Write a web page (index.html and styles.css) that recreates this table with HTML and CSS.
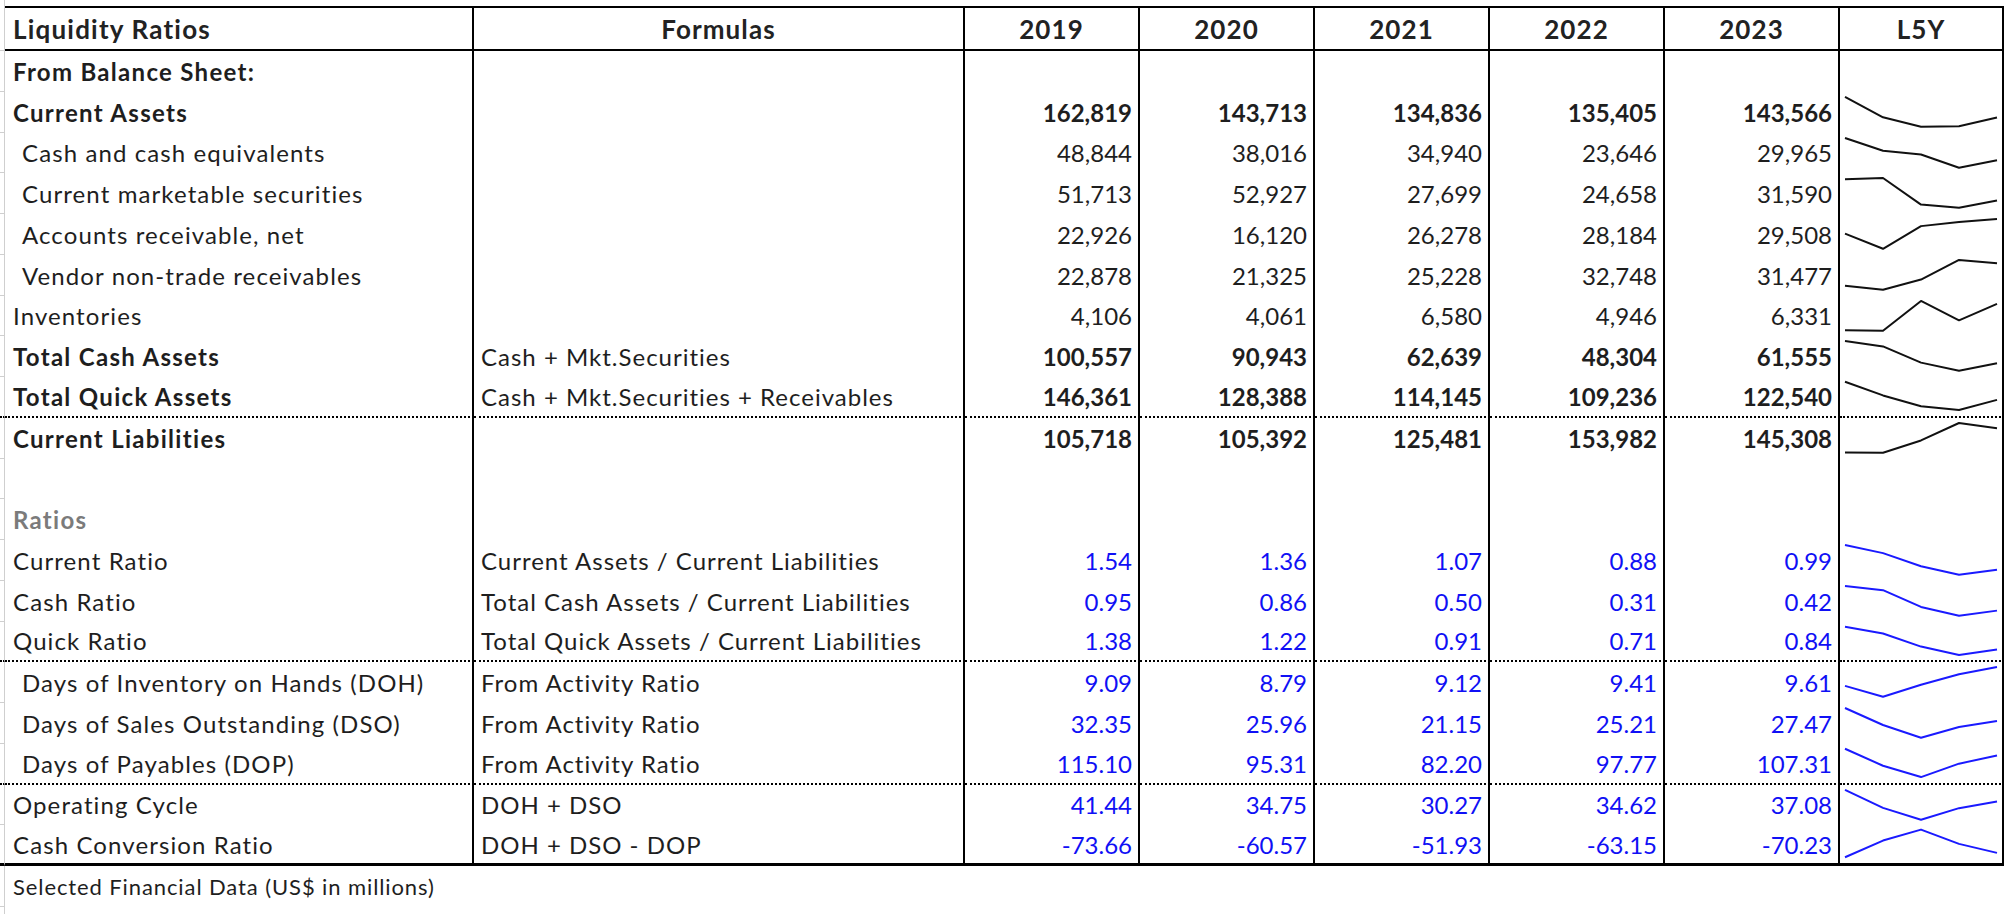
FILE: index.html
```html
<!DOCTYPE html>
<html lang="en">
<head>
<meta charset="utf-8">
<title>Liquidity Ratios</title>
<link rel="stylesheet" href="styles.css">
</head>
<body>
<div class="sheet">
  <div class="row spacer"><div class="gut"></div><div class="blank"></div></div>

  <div class="row head">
    <div class="gut"></div>
    <div class="c lbl">Liquidity Ratios</div>
    <div class="c ctr">Formulas</div>
    <div class="c ctr">2019</div>
    <div class="c ctr">2020</div>
    <div class="c ctr">2021</div>
    <div class="c ctr">2022</div>
    <div class="c ctr">2023</div>
    <div class="c ctr">L5Y</div>
  </div>

  <div class="row bold">
    <div class="gut"></div>
    <div class="c lbl">From Balance Sheet:</div>
    <div class="c"></div>
    <div class="c"></div><div class="c"></div><div class="c"></div><div class="c"></div><div class="c"></div>
    <div class="c"></div>
  </div>

  <div class="row bold">
    <div class="gut"></div>
    <div class="c lbl">Current Assets</div>
    <div class="c"></div>
    <div class="c num">162,819</div><div class="c num">143,713</div><div class="c num">134,836</div><div class="c num">135,405</div><div class="c num">143,566</div>
    <div class="c spark"><svg viewBox="0 0 162 41" preserveAspectRatio="none"><polyline points="5,5 43,25.5 81,35 119,34.4 157,25.6"/></svg></div>
  </div>

  <div class="row">
    <div class="gut"></div>
    <div class="c lbl ind">Cash and cash equivalents</div>
    <div class="c"></div>
    <div class="c num">48,844</div><div class="c num">38,016</div><div class="c num">34,940</div><div class="c num">23,646</div><div class="c num">29,965</div>
    <div class="c spark"><svg viewBox="0 0 162 41" preserveAspectRatio="none"><polyline points="5,5 43,17.9 81,21.6 119,35 157,27.5"/></svg></div>
  </div>

  <div class="row">
    <div class="gut"></div>
    <div class="c lbl ind">Current marketable securities</div>
    <div class="c"></div>
    <div class="c num">51,713</div><div class="c num">52,927</div><div class="c num">27,699</div><div class="c num">24,658</div><div class="c num">31,590</div>
    <div class="c spark"><svg viewBox="0 0 162 41" preserveAspectRatio="none"><polyline points="5,6.3 43,5 81,31.8 119,35 157,27.6"/></svg></div>
  </div>

  <div class="row">
    <div class="gut"></div>
    <div class="c lbl ind">Accounts receivable, net</div>
    <div class="c"></div>
    <div class="c num">22,926</div><div class="c num">16,120</div><div class="c num">26,278</div><div class="c num">28,184</div><div class="c num">29,508</div>
    <div class="c spark"><svg viewBox="0 0 162 41" preserveAspectRatio="none"><polyline points="5,19.7 43,35 81,12.2 119,8 157,5"/></svg></div>
  </div>

  <div class="row">
    <div class="gut"></div>
    <div class="c lbl ind">Vendor non-trade receivables</div>
    <div class="c"></div>
    <div class="c num">22,878</div><div class="c num">21,325</div><div class="c num">25,228</div><div class="c num">32,748</div><div class="c num">31,477</div>
    <div class="c spark"><svg viewBox="0 0 162 41" preserveAspectRatio="none"><polyline points="5,30.9 43,35 81,24.7 119,5 157,8.3"/></svg></div>
  </div>

  <div class="row">
    <div class="gut"></div>
    <div class="c lbl">Inventories</div>
    <div class="c"></div>
    <div class="c num">4,106</div><div class="c num">4,061</div><div class="c num">6,580</div><div class="c num">4,946</div><div class="c num">6,331</div>
    <div class="c spark"><svg viewBox="0 0 162 41" preserveAspectRatio="none"><polyline points="5,34.5 43,35 81,5 119,24.5 157,8"/></svg></div>
  </div>

  <div class="row bold">
    <div class="gut"></div>
    <div class="c lbl">Total Cash Assets</div>
    <div class="c fx">Cash + Mkt.Securities</div>
    <div class="c num">100,557</div><div class="c num">90,943</div><div class="c num">62,639</div><div class="c num">48,304</div><div class="c num">61,555</div>
    <div class="c spark"><svg viewBox="0 0 162 41" preserveAspectRatio="none"><polyline points="5,5 43,10.5 81,26.8 119,35 157,27.4"/></svg></div>
  </div>

  <div class="row bold dotted">
    <div class="gut"></div>
    <div class="c lbl">Total Quick Assets</div>
    <div class="c fx">Cash + Mkt.Securities + Receivables</div>
    <div class="c num">146,361</div><div class="c num">128,388</div><div class="c num">114,145</div><div class="c num">109,236</div><div class="c num">122,540</div>
    <div class="c spark"><svg viewBox="0 0 162 41" preserveAspectRatio="none"><polyline points="5,5 43,19.5 81,31 119,35 157,24.2"/></svg></div>
  </div>

  <div class="row bold">
    <div class="gut"></div>
    <div class="c lbl">Current Liabilities</div>
    <div class="c"></div>
    <div class="c num">105,718</div><div class="c num">105,392</div><div class="c num">125,481</div><div class="c num">153,982</div><div class="c num">145,308</div>
    <div class="c spark"><svg viewBox="0 0 162 41" preserveAspectRatio="none"><polyline points="5,34.8 43,35 81,22.6 119,5 157,10.4"/></svg></div>
  </div>

  <div class="row">
    <div class="gut"></div>
    <div class="c lbl"></div>
    <div class="c"></div>
    <div class="c"></div><div class="c"></div><div class="c"></div><div class="c"></div><div class="c"></div>
    <div class="c"></div>
  </div>

  <div class="row bold">
    <div class="gut"></div>
    <div class="c lbl muted">Ratios</div>
    <div class="c"></div>
    <div class="c"></div><div class="c"></div><div class="c"></div><div class="c"></div><div class="c"></div>
    <div class="c"></div>
  </div>

  <div class="row blue">
    <div class="gut"></div>
    <div class="c lbl">Current Ratio</div>
    <div class="c fx">Current Assets / Current Liabilities</div>
    <div class="c num">1.54</div><div class="c num">1.36</div><div class="c num">1.07</div><div class="c num">0.88</div><div class="c num">0.99</div>
    <div class="c spark"><svg viewBox="0 0 162 41" preserveAspectRatio="none"><polyline points="5,5 43,13.2 81,26.4 119,35 157,30"/></svg></div>
  </div>

  <div class="row blue">
    <div class="gut"></div>
    <div class="c lbl">Cash Ratio</div>
    <div class="c fx">Total Cash Assets / Current Liabilities</div>
    <div class="c num">0.95</div><div class="c num">0.86</div><div class="c num">0.50</div><div class="c num">0.31</div><div class="c num">0.42</div>
    <div class="c spark"><svg viewBox="0 0 162 41" preserveAspectRatio="none"><polyline points="5,5 43,9.2 81,26.1 119,35 157,29.8"/></svg></div>
  </div>

  <div class="row blue dotted">
    <div class="gut"></div>
    <div class="c lbl">Quick Ratio</div>
    <div class="c fx">Total Quick Assets / Current Liabilities</div>
    <div class="c num">1.38</div><div class="c num">1.22</div><div class="c num">0.91</div><div class="c num">0.71</div><div class="c num">0.84</div>
    <div class="c spark"><svg viewBox="0 0 162 41" preserveAspectRatio="none"><polyline points="5,5 43,12.2 81,26 119,35 157,29.2"/></svg></div>
  </div>

  <div class="row blue">
    <div class="gut"></div>
    <div class="c lbl ind">Days of Inventory on Hands (DOH)</div>
    <div class="c fx">From Activity Ratio</div>
    <div class="c num">9.09</div><div class="c num">8.79</div><div class="c num">9.12</div><div class="c num">9.41</div><div class="c num">9.61</div>
    <div class="c spark"><svg viewBox="0 0 162 41" preserveAspectRatio="none"><polyline points="5,24 43,35 81,22.9 119,12.3 157,5"/></svg></div>
  </div>

  <div class="row blue">
    <div class="gut"></div>
    <div class="c lbl ind">Days of Sales Outstanding (DSO)</div>
    <div class="c fx">From Activity Ratio</div>
    <div class="c num">32.35</div><div class="c num">25.96</div><div class="c num">21.15</div><div class="c num">25.21</div><div class="c num">27.47</div>
    <div class="c spark"><svg viewBox="0 0 162 41" preserveAspectRatio="none"><polyline points="5,5 43,22.1 81,35 119,24.1 157,18.1"/></svg></div>
  </div>

  <div class="row blue dotted">
    <div class="gut"></div>
    <div class="c lbl ind">Days of Payables (DOP)</div>
    <div class="c fx">From Activity Ratio</div>
    <div class="c num">115.10</div><div class="c num">95.31</div><div class="c num">82.20</div><div class="c num">97.77</div><div class="c num">107.31</div>
    <div class="c spark"><svg viewBox="0 0 162 41" preserveAspectRatio="none"><polyline points="5,5 43,23 81,35 119,20.8 157,12.1"/></svg></div>
  </div>

  <div class="row blue">
    <div class="gut"></div>
    <div class="c lbl">Operating Cycle</div>
    <div class="c fx">DOH + DSO</div>
    <div class="c num">41.44</div><div class="c num">34.75</div><div class="c num">30.27</div><div class="c num">34.62</div><div class="c num">37.08</div>
    <div class="c spark"><svg viewBox="0 0 162 41" preserveAspectRatio="none"><polyline points="5,5 43,23 81,35 119,23.3 157,16.7"/></svg></div>
  </div>

  <div class="row blue last">
    <div class="gut"></div>
    <div class="c lbl">Cash Conversion Ratio</div>
    <div class="c fx">DOH + DSO - DOP</div>
    <div class="c num">-73.66</div><div class="c num">-60.57</div><div class="c num">-51.93</div><div class="c num">-63.15</div><div class="c num">-70.23</div>
    <div class="c spark"><svg viewBox="0 0 162 41" preserveAspectRatio="none"><polyline points="5,35 43,16.9 81,5 119,20.5 157,30.3"/></svg></div>
  </div>

  <div class="row foot">
    <div class="gut"></div>
    <div class="note">Selected Financial Data (US$ in millions)</div>
  </div>

  <div class="row tail"><div class="gut"></div><div class="blank"></div></div>
</div>
</body>
</html>
```

FILE: styles.css
```css
* {
  box-sizing: border-box;
}

html, body {
  margin: 0;
  padding: 0;
  background: #ffffff;
}

body {
  font-family: "Lato", "Noto Sans", sans-serif;
  font-size: 24px;
  color: #1e1e1e;
}

.sheet {
  display: grid;
  grid-template-columns: 5px 469px 491px repeat(5, 175px) 164px;
  grid-template-rows: 6px 45px repeat(20, 40.75px) 40.75px 12px;
  width: 2004px;
}

.row {
  display: contents;
}

.gut {
  border-right: 1px solid #cfcfcf;
  border-bottom: 1px solid #cfcfcf;
}

.spacer .gut,
.tail .gut {
  border-bottom: none;
}

.blank {
  grid-column: 2 / -1;
}

.c {
  display: flex;
  align-items: center;
  border-right: 2px solid #000;
  padding: 0 6px;
  white-space: nowrap;
  overflow: hidden;
  min-width: 0;
}

.head .c {
  border-top: 2px solid #000;
  border-bottom: 2px solid #000;
  font-size: 26px;
  font-weight: 700;
  color: #222;
  letter-spacing: 1.1px;
}

.ctr {
  justify-content: center;
}

.lbl,
.fx {
  letter-spacing: 1.1px;
}

.bold .lbl {
  letter-spacing: 1.3px;
}

.head .lbl {
  letter-spacing: 1.2px;
}

.lbl {
  padding-left: 8px;
}

.ind {
  padding-left: 17px;
}

.fx {
  padding-left: 7px;
  letter-spacing: 1px;
}

.num {
  justify-content: flex-end;
  padding-right: 6px;
}

.bold .c {
  font-weight: 700;
}

.bold .fx {
  font-weight: 400;
}

.muted {
  color: #7b7b7b;
}

.blue .num {
  color: #1010f5;
}

.spark {
  padding: 0;
  align-items: stretch;
}

.spark svg {
  display: block;
  width: 100%;
  height: 100%;
  overflow: visible;
}

.spark polyline {
  fill: none;
  stroke: #111;
  stroke-width: 2;
  stroke-linejoin: round;
  vector-effect: non-scaling-stroke;
}

.blue .spark polyline {
  stroke: #1a1aff;
}

.dotted > div {
  border-bottom: 2px dotted #000;
}

.last > div {
  border-bottom: 3px solid #000;
}

.note {
  grid-column: 2 / -1;
  display: flex;
  align-items: center;
  padding-left: 8px;
  font-size: 22px;
  letter-spacing: 0.9px;
}
```
